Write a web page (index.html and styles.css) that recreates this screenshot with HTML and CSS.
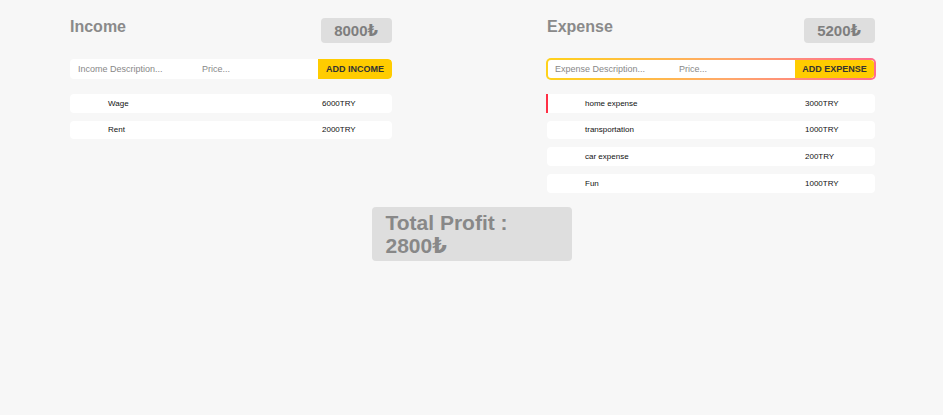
FILE: index.html
```html
<!DOCTYPE html>
<html lang="en">
<head>
<meta charset="utf-8">
<title>Budget</title>
<link rel="stylesheet" href="styles.css">
</head>
<body>
<main class="app">
  <div class="columns">
    <section class="panel">
      <header class="panel-head">
        <h2 class="panel-title">Income</h2>
        <span class="badge">8000₺</span>
      </header>
      <form class="entry">
        <input class="field" type="text" placeholder="Income Description...">
        <input class="field" type="text" placeholder="Price...">
        <button class="add-btn" type="button">ADD INCOME</button>
      </form>
      <ul class="list">
        <li class="item"><span class="name">Wage</span><span class="amount">6000TRY</span></li>
        <li class="item"><span class="name">Rent</span><span class="amount">2000TRY</span></li>
      </ul>
    </section>
    <section class="panel">
      <header class="panel-head">
        <h2 class="panel-title">Expense</h2>
        <span class="badge">5200₺</span>
      </header>
      <form class="entry entry-focus">
        <input class="field" type="text" placeholder="Expense Description...">
        <input class="field" type="text" placeholder="Price...">
        <button class="add-btn" type="button">ADD EXPENSE</button>
      </form>
      <ul class="list">
        <li class="item item-active"><span class="name">home expense</span><span class="amount">3000TRY</span></li>
        <li class="item"><span class="name">transportation</span><span class="amount">1000TRY</span></li>
        <li class="item"><span class="name">car expense</span><span class="amount">200TRY</span></li>
        <li class="item"><span class="name">Fun</span><span class="amount">1000TRY</span></li>
      </ul>
    </section>
  </div>
  <div class="total">Total Profit : 2800₺</div>
</main>
</body>
</html>
```
FILE: styles.css
```css
* { box-sizing: border-box; }
html, body {
  margin: 0;
  padding: 0;
  background: #f7f7f7;
  font-family: "Liberation Sans", Arial, "DejaVu Sans", sans-serif;
}
.app {
  width: 943px;
  min-height: 415px;
  padding-top: 18px;
}
.columns {
  display: grid;
  grid-template-columns: 322px 328px;
  column-gap: 155px;
  padding-left: 70px;
  align-items: start;
}
.panel {
  display: flex;
  flex-direction: column;
}
.panel-head {
  display: flex;
  justify-content: space-between;
  align-items: flex-start;
  height: 25px;
}
.panel-title {
  margin: 0;
  font-size: 16px;
  font-weight: bold;
  color: #8a8a8a;
  line-height: normal;
}
.badge {
  height: 25px;
  padding: 0 14px 0 13px;
  display: flex;
  align-items: center;
  background: #dedede;
  border-radius: 4px;
  font-size: 15px;
  font-weight: bold;
  color: #7e7e7e;
}
.entry {
  margin-top: 16px;
  height: 20px;
  display: flex;
  background: #fff;
  border-radius: 4px;
  overflow: hidden;
}
.entry-focus {
  height: 22px;
  margin: 15px -1px -1px -1px;
  border: 2px solid transparent;
  border-radius: 5px;
  background: linear-gradient(#fff, #fff) padding-box,
              linear-gradient(90deg, #ffd21a 0%, #ffa86a 55%, #ff6b8e 100%) border-box;
}
.field {
  width: 124px;
  flex: none;
  border: none;
  outline: none;
  background: transparent;
  padding: 0 8px;
  font-family: inherit;
  font-size: 9px;
  color: #333;
}
.entry-focus .field:first-child { width: 123px; padding-left: 7px; }
.field::placeholder { color: #888; }
.add-btn {
  flex: 1;
  border: none;
  background: #ffcc00;
  border-radius: 0 4px 4px 0;
  font-family: inherit;
  font-size: 9px;
  font-weight: bold;
  color: #333;
  padding: 0;
}
.entry-focus .add-btn { border-radius: 0 3px 3px 0; }
.list {
  list-style: none;
  margin: 15px 0 0;
  padding: 0;
  display: flex;
  flex-direction: column;
  gap: 8px;
}
.item {
  height: 18.67px;
  display: flex;
  align-items: center;
  background: #fff;
  border-radius: 4px;
  padding-left: 38px;
  font-size: 8px;
  color: #111;
}
.item-active {
  border-left: 2px solid #ff2f45;
  border-radius: 0 4px 4px 0;
  margin-left: -1px;
  padding-left: 37px;
}
.name { flex: 1; }
.amount { width: 70px; flex: none; }
.total {
  width: 200px;
  margin: 14px auto 0;
  padding: 4px 13px 4px 14px;
  background: #dedede;
  border-radius: 4px;
  font-size: 21px;
  line-height: 23px;
  font-weight: bold;
  color: #888;
}
```
